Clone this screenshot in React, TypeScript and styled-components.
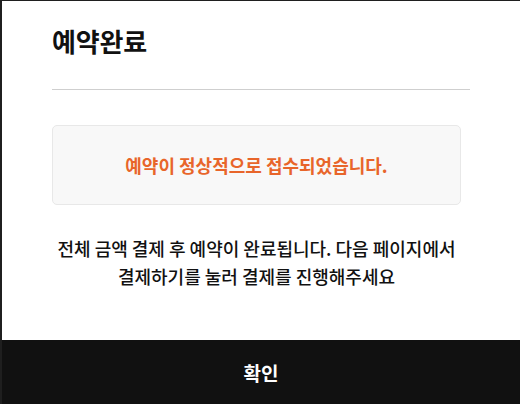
import React from "react";
import styled, { createGlobalStyle } from "styled-components";

const Global = createGlobalStyle`
  html, body { margin: 0; padding: 0; }
  body {
    background: #1f1f1f;
    font-family: "Noto Sans CJK KR", "Noto Sans", sans-serif;
    overflow: hidden;
  }
`;

const Modal = styled.div`
  margin: 1px 0 0 2px;
  width: 518px;
  background: #ffffff;
  display: flex;
  flex-direction: column;
`;

const Body = styled.div`
  padding: 20px 50px 0 50px;
  display: flex;
  flex-direction: column;
`;

const Title = styled.h1`
  margin: 0;
  padding-bottom: 28px;
  border-bottom: 1px solid #cfcfcf;
  font-size: 26px;
  line-height: 40px;
  font-weight: 700;
  color: #111;
  letter-spacing: -0.2px;
`;

const NoticeBox = styled.div`
  margin-top: 35px;
  width: 407px;
  height: 78px;
  box-sizing: content-box;
  border: 1px solid #e8e8e8;
  border-radius: 5px;
  background: #f8f8f8;
  display: flex;
  align-items: center;
  justify-content: center;
`;

const NoticeText = styled.p`
  margin: 0;
  font-size: 18px;
  font-weight: 700;
  color: #e8652a;
`;

const Description = styled.p`
  margin: 29px 0 0 0;
  width: 409px;
  font-size: 18px;
  line-height: 28px;
  font-weight: 500;
  color: #111;
  text-align: center;
`;

const ConfirmButton = styled.button`
  margin-top: 50px;
  height: 64px;
  border: none;
  background: #111111;
  color: #ffffff;
  font-family: inherit;
  font-size: 19px;
  font-weight: 700;
  cursor: pointer;
`;

export default function App() {
  return (
    <>
      <Global />
      <Modal>
        <Body>
          <Title>예약완료</Title>
          <NoticeBox>
            <NoticeText>예약이 정상적으로 접수되었습니다.</NoticeText>
          </NoticeBox>
          <Description>
            전체 금액 결제 후 예약이 완료됩니다. 다음 페이지에서
            <br />
            결제하기를 눌러 결제를 진행해주세요
          </Description>
        </Body>
        <ConfirmButton>확인</ConfirmButton>
      </Modal>
    </>
  );
}
